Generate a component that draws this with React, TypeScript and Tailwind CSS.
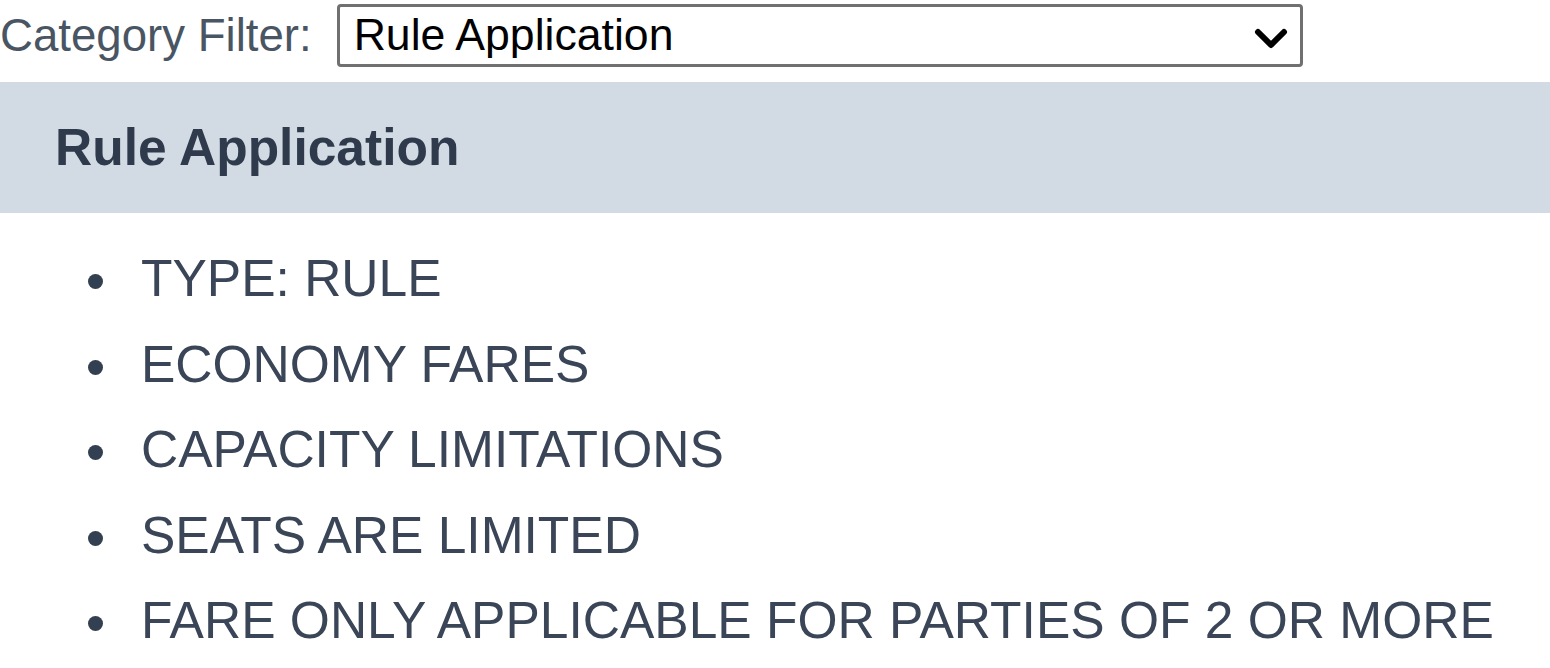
import React, { useState } from 'react'

const rules = [
  'TYPE: RULE',
  'ECONOMY FARES',
  'CAPACITY LIMITATIONS',
  'SEATS ARE LIMITED',
  'FARE ONLY APPLICABLE FOR PARTIES OF 2 OR MORE',
]

export default function App() {
  const [category, setCategory] = useState('Rule Application')

  return (
    <div className="min-h-screen bg-white font-['Liberation_Sans',Arial,sans-serif]">
      {/* filter row */}
      <div className="flex items-center gap-[25px] pt-[4px]">
        <label className="text-[45.6px] leading-none text-[#4a5563]">Category Filter:</label>
        <div className="relative">
          <select
            value={category}
            onChange={(e) => setCategory(e.target.value)}
            className="appearance-none w-[966px] h-[63px] pl-[14px] text-[44.6px] leading-none text-black bg-white border-[3px] border-[#707070] rounded-[4px] outline-none font-['Liberation_Sans',Arial,sans-serif]"
          >
            <option>Rule Application</option>
            <option>Fare Basis</option>
            <option>Penalties</option>
          </select>
          <svg
            className="absolute right-[15px] top-[24px] w-[34px] h-[22px] pointer-events-none"
            viewBox="0 0 34 22"
            fill="none"
            stroke="black"
            strokeWidth={6}
            strokeLinecap="round"
            strokeLinejoin="round"
          >
            <path d="M4 4l13 13L30 4" />
          </svg>
        </div>
      </div>

      {/* section header */}
      <div className="mt-[15px] h-[131px] flex items-center pl-[55px] bg-[#d2dbe3]">
        <h2 className="text-[51.5px] font-bold leading-none text-[#2f3b4c]">{category}</h2>
      </div>

      {/* rule list */}
      <ul className="pt-[23px]">
        {rules.map((r) => (
          <li key={r} className="flex items-center h-[85.5px] text-[51.5px] leading-none text-[#3a4657]">
            <span className="ml-[88px] w-[15px] h-[15px] rounded-full bg-[#324052] mt-[6px]" />
            <span className="ml-[38px]">{r}</span>
          </li>
        ))}
      </ul>
    </div>
  )
}
